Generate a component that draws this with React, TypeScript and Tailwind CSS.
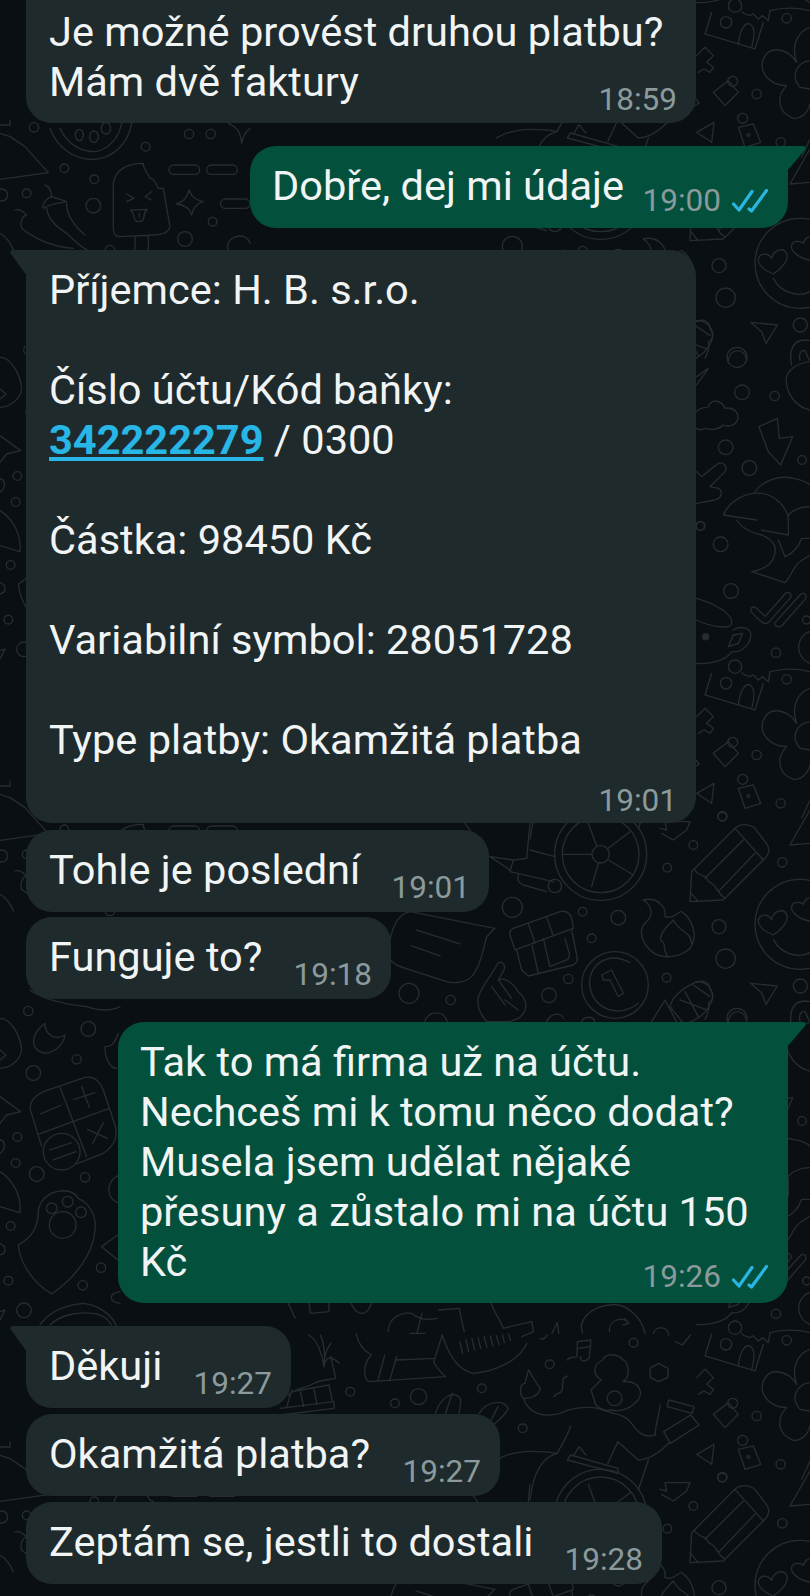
import type { ReactNode } from 'react';

type Dot = [number, number, number];

const Rings = ({ items }: { items: Dot[] }) => (
  <>
    {items.map(([cx, cy, r], i) => (
      <circle key={i} cx={cx} cy={cy} r={r} />
    ))}
  </>
);

// each block is traced in the pixel space of one region, then scaled back to the page
const DoodleTile = () => (
  <g fill="none" stroke="#262d31" strokeWidth={4} strokeLinecap="round" strokeLinejoin="round">
    <g transform="translate(690 230) scale(0.3333)">
      <Rings items={[[87, 107, 21], [107, 203, 29], [331, 285, 21], [141, 382, 30], [156, 487, 22], [254, 498, 14], [107, 652, 22], [178, 714, 22], [336, 690, 13], [30, 888, 13], [330, 100, 135]]} />
      <path d="M250 132C215 118 195 95 210 78C222 66 240 75 245 85C250 60 280 50 290 70C298 90 275 115 250 132Z" />
      <path d="M250 145C270 185 320 205 360 185" />
      <path d="M360 90C330 85 300 65 305 45C312 28 335 35 340 40C345 25 355 20 360 20" />
      <path d="M182 277L262 285L228 340L215 305Z" />
      <path d="M305 405C295 360 310 330 345 330L360 332M330 390C325 370 335 358 345 362L358 390M360 395C320 400 290 420 288 450C290 490 315 530 360 540" />
      <path d="M20 545C30 530 50 535 55 530C65 505 95 510 105 535C130 530 150 550 142 570C135 590 110 590 100 585C85 600 60 600 45 595C35 600 25 600 20 595" />
      <path d="M207 590L262 565L268 625L308 620L272 705L235 665Z" />
      <path d="M20 275C40 265 60 275 60 295C72 310 70 330 55 335C60 355 50 375 45 385M20 440L55 415L20 465" />
      <path d="M20 725L35 740L85 700C100 695 115 710 105 725L60 770L85 775C100 785 95 805 75 810L20 820" />
      <path d="M100 855C120 810 170 785 215 790C260 795 295 840 295 870M100 855L200 870M195 785C220 750 270 735 310 745C335 750 355 760 360 765M295 855C315 835 340 830 360 830" />
    </g>

    <g transform="translate(690 520) scale(0.3333)">
      <Rings items={[[92, 73, 22], [123, 213, 22], [258, 398, 14], [135, 440, 20], [108, 490, 17], [290, 478, 14], [200, 705, 14], [272, 850, 14], [97, 888, 14], [32, 18, 13], [350, 300, 12], [128, 667, 15], [158, 778, 15], [175, 828, 4]]} />
      <path d="M140 0C160 30 190 40 215 45C250 60 265 80 250 115C240 140 210 150 185 155L285 188C305 170 310 130 345 115L360 105M295 0L295 45L215 30M265 60L285 110C310 100 325 85 335 55L360 55" />
      <path d="M183 265C190 255 200 262 225 290L285 222C295 210 310 225 300 235L235 308C225 315 215 310 183 275ZM255 308L330 225C340 212 355 228 345 238L275 318C265 325 250 315 255 308Z" />
      <path d="M20 235C70 250 130 280 125 310C120 330 60 320 20 300M20 430C60 435 110 420 125 395C155 400 185 370 182 340C180 325 150 315 130 330M115 380L130 345L158 340L145 370Z" />
      <circle cx={47} cy={350} r={9} fill="#262d31" />
      <path d="M65 460L45 525L195 570L220 490M145 555C150 510 165 490 180 495C195 505 195 530 185 565M155 458C165 470 172 465 178 470L190 465L205 480L218 470L235 485L240 455C280 445 320 445 360 455" />
      <path d="M20 590L45 565L70 590L50 610L70 625L60 640L42 630L25 640" />
      <path d="M320 610C295 570 240 555 220 600C205 640 240 680 290 680M320 610C305 570 315 520 360 505M360 605C320 610 300 650 330 685L360 690M290 680C260 710 260 760 310 778C335 780 355 760 360 735M360 335C320 345 310 410 360 430" />
      <path d="M70 700L115 665L145 700L105 740ZM145 805L190 795L212 850L165 865ZM20 820L72 790L65 850ZM360 840L335 895" />
    </g>

    <g transform="translate(390 810) scale(0.3333)">
      <Rings items={[[632, 133, 138], [632, 133, 115], [632, 133, 26], [367, 292, 30], [578, 305, 13], [685, 323, 22], [605, 385, 13], [830, 503, 13], [535, 507, 14], [477, 556, 22], [57, 550, 30], [182, 570, 14], [832, 173, 13], [910, 105, 13], [1177, 157, 14], [997, 20, 13], [675, 525, 100], [495, 228, 20]]} />
      <path d="M595 40L620 108M720 65L655 115M520 133L604 133M730 195L655 150M605 230L625 160" />
      <path d="M900 275L905 185L1035 55C1050 40 1075 40 1095 55L1125 95C1140 110 1140 130 1125 145L1000 270ZM1035 55L1120 150M945 205L1060 90M985 245L1095 130M915 180C930 205 950 190 955 215C985 225 975 245 1005 265M900 245L925 275" />
      <path d="M1260 0L1200 105L1260 100" />
      <path d="M0 390C10 340 30 310 60 305L315 355L290 380C280 420 270 470 245 500C225 520 190 520 170 515L60 480C30 470 0 460 0 440M78 360L210 402M65 408L150 438" />
      <path d="M225 40L290 130M420 40L410 145L370 150L300 140L360 180M420 120L495 140M370 150L360 185L490 215M385 195C380 215 390 220 400 225L470 245" />
      <path d="M370 355L510 305C530 300 540 310 545 325L550 355L375 420L360 375C358 365 362 358 370 355ZM415 340L435 400M470 320L490 378M380 420L395 480L415 498L550 465C560 460 565 450 560 435L545 360M425 400L445 490M460 385L480 470L530 450C540 445 540 430 535 420L525 385" />
      <path d="M760 270C800 260 830 290 825 320C850 330 870 300 875 305C910 330 925 380 900 415C870 445 810 450 780 420C755 395 745 360 765 340C790 320 790 290 760 270ZM850 330C820 360 805 380 815 395C830 395 815 420 835 440M850 330C870 370 900 360 905 400" />
      <path d="M720 458C650 420 590 470 600 530C610 600 690 625 745 580M635 495L665 480L700 550L685 560L660 510L640 510Z" />
      <path d="M265 560C280 520 310 490 322 462C330 450 348 460 342 480L325 510C345 500 370 520 385 545C410 565 420 600 385 625L360 635L290 635C270 610 260 590 265 560ZM305 530L345 585M325 510L365 565M345 570L385 600" />
      <path d="M840 590C850 550 890 530 920 515C960 515 975 550 965 575C950 610 920 630 890 640M870 570L950 600M885 545L925 620M910 525L960 560M840 590L880 640M785 635L825 570L860 635" />
      <path d="M105 635C110 605 160 595 172 635M470 635C480 610 510 605 520 625M575 635C580 620 610 615 615 635M1015 635C1020 595 1065 595 1070 635" />
      <path d="M810 55L830 60L825 35L900 35L890 60L850 90L815 70" />
    </g>

    <g transform="translate(280 639) scale(0.338 0.3333)">
      <Rings items={[[798, 193, 13], [1046, 128, 13], [597, 265, 13], [208, 275, 13], [340, 310, 13], [410, 290, 24], [718, 385, 13], [990, 295, 22]]} />
      <path d="M20 320L35 270M35 275L145 255L155 305M0 325L160 305L160 325L0 345M25 285C50 260 80 265 100 250C120 240 140 240 165 235L150 170M85 105C110 120 125 160 130 200M120 105C130 130 135 160 130 200M175 190C150 165 135 170 130 200M150 130C135 150 130 180 130 200M60 275L70 320M100 265L110 315" />
      <path d="M225 100C235 150 265 160 270 165C245 190 245 240 265 245L490 230C470 215 450 180 455 185L480 105C500 170 530 210 570 220C640 215 710 180 730 130M310 165L290 240M345 170L325 240M345 180L460 175" />
      <path d="M320 95C320 60 350 35 390 40C410 60 440 60 465 55M405 100L420 40M385 100L430 100M470 30L530 25L545 95M620 0C640 50 660 75 660 85L745 65L750 95L715 110M85 0L90 40L145 35L145 0M210 10C230 55 260 45 270 10M20 0L45 55" />
      <path d="M532 125L540 160M550 118L558 155M568 115L576 150M586 112L594 146M604 110L612 142M622 108L630 138M640 106L648 134M658 104L664 128M676 102L682 122" />
      <path d="M850 180C860 165 875 175 878 170L880 125L920 120L915 175C900 190 885 180 890 170M880 145L920 140M810 290C820 275 830 285 835 270L838 235L850 228M770 115C780 120 785 115 790 105M805 100L820 68L825 100" />
      <path d="M895 100C880 60 920 20 975 15C1020 5 1070 50 1080 100M975 95C970 60 1020 45 1030 70M1020 55L1032 70L1015 75M1105 100C1110 75 1150 80 1150 105M1170 125L1190 135L1215 105" />
      <path d="M1095 205L1120 190L1148 205L1148 232L1120 245L1095 232Z" />
      <path d="M460 340C475 290 520 265 535 300L530 340M490 340L510 280M590 340C610 305 660 295 675 325C670 340 645 365 630 375M625 360L645 320" />
      <path d="M735 210C745 225 760 255 770 265C765 285 745 295 720 295C708 285 708 250 725 250ZM720 295C740 350 790 350 830 340C870 320 920 320 940 325C990 345 1020 340 1040 370C1060 400 1080 415 1110 405M860 378C850 410 830 440 820 460" />
      <path d="M950 240C920 220 930 190 955 180C965 155 1005 165 1015 180C1035 190 1035 235 1015 245C1060 240 1085 280 1050 310C1030 330 1000 335 980 330C955 335 930 320 930 300L920 270Z" />
      <path d="M1150 300L1225 320L1220 340L1145 320ZM1125 315C1120 350 1110 380 1110 405M1135 395L1215 345L1240 375L1155 430ZM1150 430C1120 460 1090 480 1060 480L1000 425L970 490M1090 480L1060 570" />
      <path d="M640 480C690 450 750 450 820 460M850 480L1000 520L1000 505L860 465ZM870 465L885 440L905 465M740 600C750 510 780 470 820 460" />
    </g>

    <g transform="translate(0 329) scale(0.3333)">
      <Rings items={[[85, 63, 14], [265, 117, 22], [230, 208, 14], [100, 249, 22], [52, 441, 13], [47, 519, 13], [110, 552, 22], [255, 562, 14], [32, 708, 13], [303, 833, 14], [248, 886, 14], [25, 872, 13], [72, 961, 22], [185, 485, 55], [188, 705, 40], [155, 655, 16], [203, 635, 16], [243, 667, 16]]} />
      <path d="M90 0C120 25 200 45 260 50C290 60 330 65 360 50" />
      <path d="M0 85C30 85 60 130 65 180C60 215 25 235 0 235M0 180L18 195L0 210" />
      <path d="M135 100C95 130 90 170 120 185C150 200 190 170 195 135C170 150 135 140 135 100Z" />
      <path d="M90 355C90 330 110 315 130 305L255 262C285 258 300 275 310 300L345 405C355 440 340 470 310 490L230 522M125 470L90 355M180 292L260 500M118 432L328 355M122 372L185 345M222 328L285 308M245 290L268 352M262 418L322 445M310 398L278 460M150 480L215 458M160 510L228 485" />
      <path d="M0 320L62 365L20 375L0 400M0 450C15 450 20 475 0 490M0 545C40 570 65 620 60 668L0 650" />
      <path d="M55 765C90 745 115 720 115 660C125 620 150 610 170 605C190 600 220 600 235 625C270 640 290 680 285 720C280 790 230 860 155 912C100 880 60 820 55 765ZM0 760C20 770 20 790 0 795" />
      <path d="M355 130C340 170 330 170 315 170C315 215 335 235 350 235M360 555C315 570 315 630 360 640M360 730L305 770L360 815M360 905C325 910 325 935 360 940" />
      <path d="M120 1005C150 960 200 945 250 940C300 945 340 980 350 1010M150 1005C180 975 230 965 280 970C310 975 320 985 335 1005M0 965L15 960L0 990" />
    </g>

    <g transform="translate(0 781) scale(0.3333)">
      <Rings items={[[102, 22, 14], [193, 145, 13], [283, 178, 13], [80, 220, 13], [280, 257, 22], [437, 80, 13], [567, 42, 14], [632, 42, 14], [638, 305, 13], [555, 357, 22], [330, 390, 14], [5, 225, 18]]} />
      <path d="M150 25C170 80 220 120 280 118C340 115 385 70 395 10M180 25C200 70 240 95 285 95C320 90 355 60 365 10" />
      <ellipse cx={238} cy={45} rx={12} ry={17} />
      <ellipse cx={282} cy={50} rx={13} ry={17} />
      <ellipse cx={318} cy={25} rx={14} ry={17} />
      <path d="M0 15L30 15L30 0M0 40L30 50L75 80L145 158L0 178" />
      <path d="M340 325L340 190C345 150 380 130 430 130C430 150 445 160 450 175C465 175 470 195 475 205L490 205L510 320C505 340 480 345 460 345L360 350C345 350 340 340 340 325ZM405 350L405 390M445 345L445 390M380 222L402 235L380 245M455 215L435 230L455 240" />
      <path d="M392 270L442 268C435 275 432 280 432 290C430 310 405 310 402 290C400 280 398 275 392 270ZM418 280L418 292" />
      <path d="M568 210C575 235 590 240 610 245C590 250 580 265 575 285C570 265 555 255 530 252C550 245 560 235 568 210Z" />
      <rect x={507} y={135} width={92} height={28} rx={14} />
      <rect x={620} y={135} width={92} height={28} rx={14} />
      <rect x={662} y={237} width={88} height={28} rx={14} />
      <path d="M685 10C705 20 720 25 725 70C730 40 745 30 750 25" />
      <path d="M135 195C150 200 155 220 155 230C135 235 125 260 130 265C150 250 180 250 200 245C185 240 170 235 155 230M140 265C145 300 170 320 200 340C230 370 250 385 262 390M200 250C200 290 225 320 255 345" />
      <path d="M45 270C60 265 75 280 80 285C65 290 60 310 65 325C95 350 150 380 220 385M0 340C20 350 35 375 40 390M685 390C670 350 740 330 750 370" />
    </g>
  </g>
);

const DoubleTick = () => (
  <svg width="36" height="24" viewBox="0 0 36 24" fill="none" stroke="#2ab6e0" strokeWidth="3.2" strokeLinecap="round" strokeLinejoin="round">
    <path d="M1.5 15L7 21L20 2.5" />
    <path d="M17 20L19.5 22L34.5 1.5" />
  </svg>
);

const Time = ({ children }: { children: ReactNode }) => (
  <span className="text-[31.5px] leading-[40px] text-[#8b9a9c]">{children}</span>
);

const TailLeft = () => (
  <svg className="absolute left-[-16px] top-0" width="17" height="26" viewBox="0 0 17 26">
    <path d="M17 0H3C0.5 0 -0.5 2 1 4L17 26Z" fill="#1f2a2c" />
  </svg>
);

const TailRight = () => (
  <svg className="absolute right-[-18px] top-0" width="19" height="25" viewBox="0 0 19 25">
    <path d="M0 0H16C18.5 0 19.5 2 18 4L0 25Z" fill="#03503c" />
  </svg>
);

// one line of text with the time sitting low on its right
const ShortIn = ({ text, time, width, mt, tail }: { text: string; time: string; width: string; mt: string; tail?: boolean }) => (
  <div className={`relative ml-[26px] flex h-[82px] items-start justify-between bg-[#1f2a2c] pl-[23px] pr-[19px] pt-[15px] ${width} ${mt} ${tail ? 'rounded-[26px] rounded-tl-none' : 'rounded-[26px]'}`}>
    {tail && <TailLeft />}
    <span className="whitespace-nowrap">{text}</span>
    <span className="pt-[14px]">
      <Time>{time}</Time>
    </span>
  </div>
);

export default function App() {
  return (
    <div className="relative h-[1596px] w-[810px] overflow-hidden bg-[#0a0f14] font-['Roboto',sans-serif] text-[41.55px] leading-[50px] text-[#f1f4f4]">
      <svg className="absolute inset-0" width="810" height="1596" aria-hidden="true">
        {[-661, 0, 661, 1322].map((dy) => (
          <g key={dy} transform={`translate(0 ${dy})`}>
            <DoodleTile />
          </g>
        ))}
      </svg>

      <div className="relative flex flex-col">
        <div className="ml-[26px] mt-[-20px] h-[143px] w-[670px] rounded-b-[26px] bg-[#1f2a2c] pl-[23px] pr-[19px] pt-[27px]">
          <p className="whitespace-nowrap">
            Je možné provést druhou platbu?
            <br />
            Mám dvě faktury
          </p>
          <div className="mt-[-27px] flex justify-end">
            <Time>18:59</Time>
          </div>
        </div>

        <div className="relative mr-[22px] mt-[23px] flex h-[82px] w-[538px] items-start self-end rounded-[26px] rounded-tr-none bg-[#03503c] pl-[22px] pt-[15px]">
          <TailRight />
          <span className="whitespace-nowrap">Dobře, dej mi údaje</span>
          <div className="ml-auto flex items-center gap-[11px] pr-[20px] pt-[20px]">
            <Time>19:00</Time>
            <DoubleTick />
          </div>
        </div>

        <div className="relative ml-[26px] mt-[22px] h-[573px] w-[670px] rounded-[26px] rounded-tl-none bg-[#1f2a2c] pl-[23px] pr-[19px] pt-[15px]">
          <TailLeft />
          <p className="whitespace-nowrap">
            Příjemce: H. B. s.r.o.
            <br />
            <br />
            Číslo účtu/Kód baňky:
            <br />
            <span className="font-bold text-[#27b6e6] underline">342222279</span> / 0300
            <br />
            <br />
            Částka: 98450 Kč
            <br />
            <br />
            Variabilní symbol: 28051728
            <br />
            <br />
            Type platby: Okamžitá platba
          </p>
          <div className="mt-[16px] flex justify-end">
            <Time>19:01</Time>
          </div>
        </div>

        <ShortIn text="Tohle je poslední" time="19:01" width="w-[463px]" mt="mt-[7px]" />
        <ShortIn text="Funguje to?" time="19:18" width="w-[365px]" mt="mt-[5px]" />

        <div className="relative mr-[22px] mt-[23px] h-[281px] w-[670px] self-end rounded-[26px] rounded-tr-none bg-[#03503c] pl-[22px] pt-[15px]">
          <TailRight />
          <p className="whitespace-nowrap">
            Tak to má firma už na účtu.
            <br />
            Nechceš mi k tomu něco dodat?
            <br />
            Musela jsem udělat nějaké
            <br />
            přesuny a zůstalo mi na účtu 150
            <br />
            Kč
          </p>
          <div className="mt-[-30px] flex items-center justify-end gap-[11px] pr-[20px]">
            <Time>19:26</Time>
            <DoubleTick />
          </div>
        </div>

        <ShortIn text="Děkuji" time="19:27" width="w-[265px]" mt="mt-[23px]" tail />
        <ShortIn text="Okamžitá platba?" time="19:27" width="w-[474px]" mt="mt-[6px]" />
        <ShortIn text="Zeptám se, jestli to dostali" time="19:28" width="w-[636px]" mt="mt-[6px]" />
      </div>
    </div>
  );
}
